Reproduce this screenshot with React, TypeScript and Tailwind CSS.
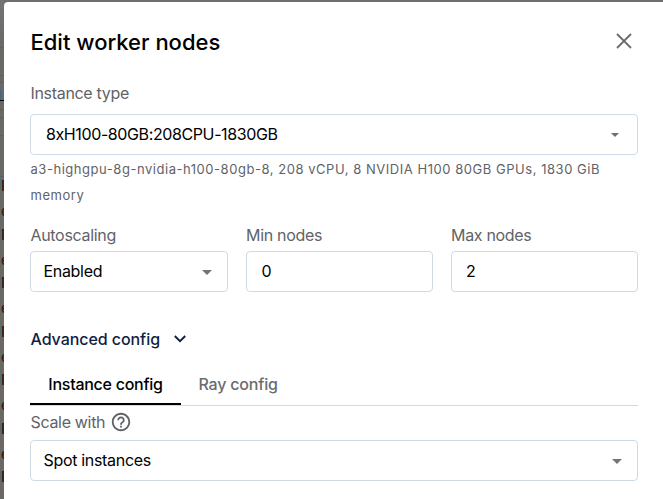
import type { ReactNode } from 'react';

const rows = [0, 1, 2, 3, 4, 5, 6];

function Caret({ small = false }: { small?: boolean }) {
  return small ? (
    <svg className="h-[4px] w-[8px]" viewBox="0 0 8 4" fill="#6f6f6f"><path d="M0 0h8L4 4z" /></svg>
  ) : (
    <svg className="mt-px h-[5px] w-[10px]" viewBox="0 0 10 5" fill="#757575"><path d="M0 0h10L5 5z" /></svg>
  );
}

function Field({ className = '', children }: { className?: string; children: ReactNode }) {
  return (
    <div className={`flex h-[41px] items-center justify-between rounded-[4px] border border-[#cfdae7] bg-white text-[16px] leading-[24px] text-black ${className}`}>
      {children}
    </div>
  );
}

function Label({ inset = true, children }: { inset?: boolean; children: ReactNode }) {
  return <div className={`h-[26px] whitespace-nowrap text-[16px] leading-[20px] tracking-[-0.32px] text-[#5f6368] ${inset ? 'pl-[0.5px]' : ''}`}>{children}</div>;
}

function Backdrop() {
  return (
    <div className="w-[4px] shrink-0 overflow-hidden bg-[#6b6966]">
      <div className="h-[47px] bg-linear-to-b from-[#747474] to-[#6b6966]" />
      <div className="h-[28px] border-t border-[#5f6163]" />
      <div className="h-[7px] border-t border-[#5a6067]" />
      <div className="h-[8px] border-t border-[#5a6067]" />
      <div className="h-[10px] w-px bg-[#42687a]" />
      <div className="h-[9px] border-t border-black" />
      <div className="h-[8px] border-t border-[#5a6067]" />
      <div className="h-[18px] border-t border-[#5a6067]" />
      <div className="h-[41px] border-t border-[#5a6067]" />
      <div className="h-[2px] border-t border-[#536269]" />
      {rows.map((row) => (
        <div key={row} className="h-[48.5px] font-semibold text-[#38200f]">
          <div className="flex h-[24px] items-start">
            <span className="mt-[2px] h-[9px] w-px shrink-0 bg-[#526a74]" />
            <span className="text-[14px] leading-[16px]">R</span>
          </div>
          <div className="ml-[1px] h-[24px] text-[13px] leading-[18px]">e</div>
        </div>
      ))}
    </div>
  );
}

export default function App() {
  return (
    <div className="flex h-[499px] w-[663px] overflow-hidden bg-[#6e6e6e] font-['Inter',sans-serif]">
      <Backdrop />
      <main className="mt-[2px] h-[497px] w-[659px] rounded-tl-[4px] bg-white pl-[26px] pr-[25px]">
        <header className="flex h-[81px] items-start justify-between pt-[24px]">
          <h1 className="pl-[0.5px] text-[22px] font-medium leading-[32px] text-black">Edit worker nodes</h1>
          <svg className="mr-[6px] mt-[7px] size-[16px]" viewBox="0 0 16 16" fill="none" stroke="#6b6b6b" strokeWidth="1.8"><path d="m1 1 14 14M15 1 1 15" /></svg>
        </header>
        <Label>Instance type</Label>
        <div className="mt-[5px]">
          <Field className="pl-[15px] pr-[18px]"><span className="-mt-[2px] tracking-[-0.39px]">8xH100-80GB:208CPU-1830GB</span><Caret small /></Field>
        </div>
        <p className="mt-px h-[53px] w-[600px] pl-[0.5px] text-[13px] leading-[26px] tracking-[0.54px] text-[#5f6368]">a3-highgpu-8g-nvidia-h100-80gb-8, 208 vCPU, 8 NVIDIA H100 80GB GPUs, 1830 GiB memory</p>
        <div className="mt-[16px] grid grid-cols-[198px_187px_187px] gap-[18px]">
          <div><Label>Autoscaling</Label><Field className="pl-[12.500px] pr-[15px]"><span className="-mt-[2px] tracking-[-0.32px]">Enabled</span><Caret /></Field></div>
          <div><Label inset={false}>Min nodes</Label><Field className="pl-[14.500px]"><span className="-mt-[2px]">0</span></Field></div>
          <div><Label inset={false}>Max nodes</Label><Field className="pl-[14px]"><span className="-mt-[2px]">2</span></Field></div>
        </div>
        <button className="mt-[35px] flex h-[24px] items-center gap-[14px] pl-[0.5px] text-[16px] font-medium text-[#0e1f44]">
          <span className="tracking-[-0.06px]">Advanced config</span>
          <svg className="h-[8px] w-[12px]" viewBox="0 0 12 8" fill="none" stroke="currentColor" strokeWidth="1.9"><path d="m.8 1 5.2 5.2L11.200 1" /></svg>
        </button>
        <nav className="mt-[14px] flex h-[41px] border-b border-[#cfdae7] text-[16px] font-medium leading-[38px]">
          <span className="h-[40px] w-[151px] border-b-2 border-black text-center tracking-[-0.27px] text-black">Instance config</span>
          <span className="ml-[17.500px] tracking-[-0.2px] text-[#6a6c6e]">Ray config</span>
        </nav>
        <div className="mt-[5px] flex h-[22px] items-center gap-[5px] pl-[0.5px] text-[16px] leading-[22px] text-[#5f6368]">
          <span className="tracking-[-0.32px]">Scale with</span>
          <svg className="size-[22px]" viewBox="0 0 24 24" fill="currentColor"><path d="M11 18h2v-2h-2zm1-16C6.480 2 2 6.480 2 12s4.480 10 10 10 10-4.480 10-10S17.520 2 12 2m0 18c-4.410 0-8-3.590-8-8s3.590-8 8-8 8 3.590 8 8-3.590 8-8 8m0-14c-2.210 0-4 1.790-4 4h2c0-1.100.9-2 2-2s2 .9 2 2c0 2-3 1.750-3 5h2c0-2.250 3-2.500 3-5 0-2.210-1.790-4-4-4" /></svg>
        </div>
        <Field className="mt-[7px] pl-[12.500px] pr-[15px]"><span className="-mt-[2px] tracking-[-0.32px]">Spot instances</span><Caret /></Field>
      </main>
    </div>
  );
}
